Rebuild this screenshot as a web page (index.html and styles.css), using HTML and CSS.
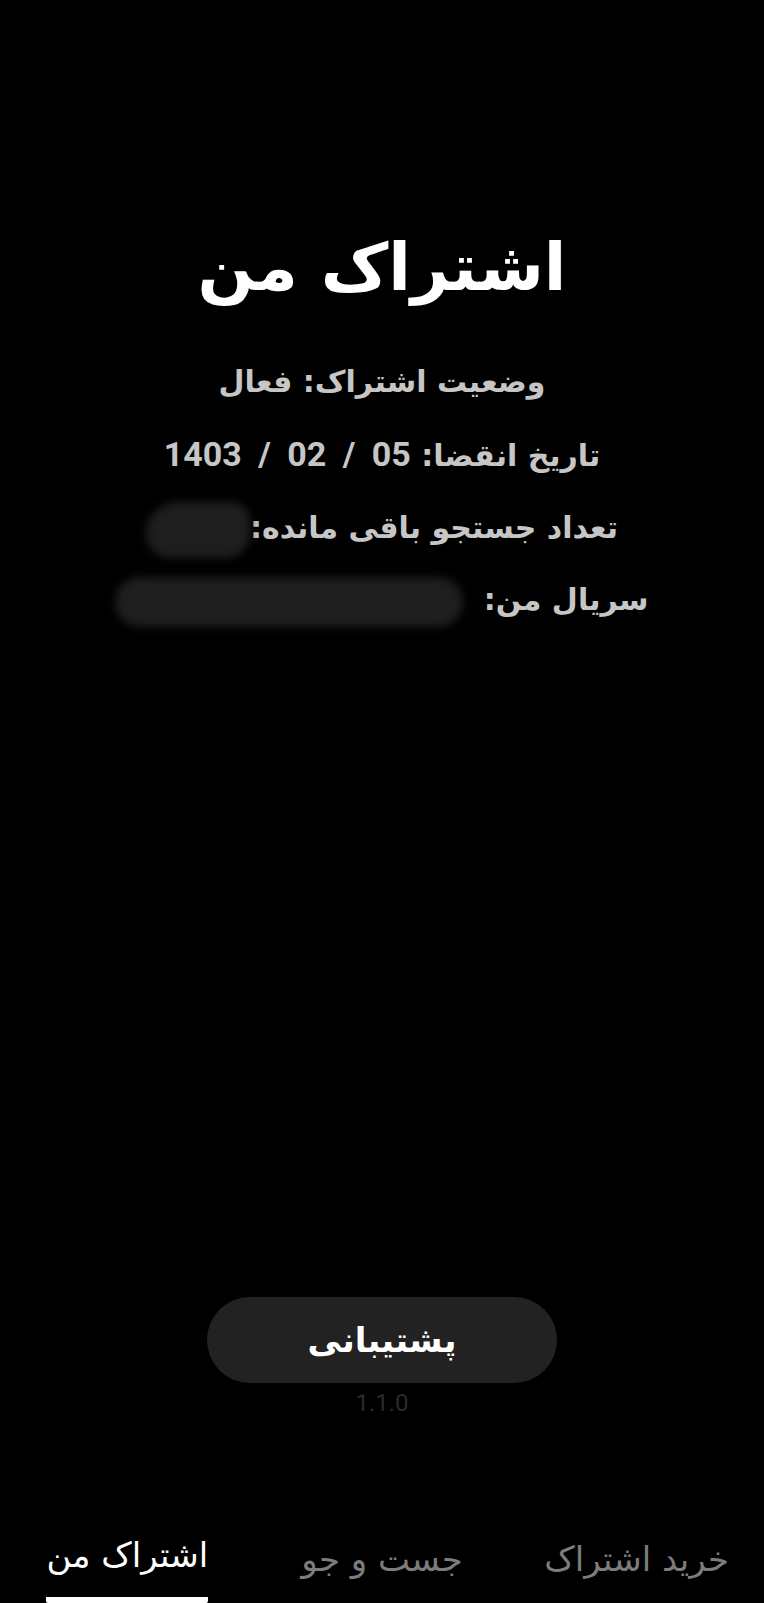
FILE: index.html
```html
<!DOCTYPE html>
<html lang="fa" dir="rtl">
<head>
<meta charset="utf-8">
<link rel="stylesheet" href="styles.css">
<title>اشتراک من</title>
</head>
<body>
<div class="screen">
  <main class="content">
    <h1 class="title">اشتراک من</h1>
    <div class="info">
      <p class="line">وضعیت اشتراک: فعال</p>
      <p class="line">تاریخ انقضا: <span class="num">05 / 02 / 1403</span></p>
      <p class="line">تعداد جستجو باقی مانده:<span class="blur blur-short"></span></p>
      <p class="line">سریال من: <span class="blur blur-long"></span></p>
    </div>
  </main>
  <div class="bottom">
    <button class="support">پشتیبانی</button>
    <div class="version">1.1.0</div>
  </div>
  <nav class="tabs" dir="ltr">
    <div class="tab active"><span class="tab-label">اشتراک من</span></div>
    <div class="tab"><span class="tab-label">جست و جو</span></div>
    <div class="tab"><span class="tab-label">خرید اشتراک</span></div>
  </nav>
</div>
</body>
</html>
```

FILE: styles.css
```css
html, body {
  margin: 0;
  padding: 0;
  background: #000;
}
body {
  font-family: "DejaVu Sans", "Noto Sans", sans-serif;
  color: #fff;
}
.screen {
  height: 1603px;
  display: flex;
  flex-direction: column;
  overflow: hidden;
}
.content {
  flex: 1;
  display: flex;
  flex-direction: column;
  align-items: center;
  padding-top: 216px;
}
.title {
  margin: 0;
  font-size: 66px;
  font-weight: 700;
  line-height: 104px;
  color: #fff;
}
.info {
  margin-top: 42px;
  display: flex;
  flex-direction: column;
  align-items: center;
  gap: 30px;
}
.line {
  margin: 0;
  font-size: 30px;
  font-weight: 700;
  line-height: 40px;
  color: #c6c6c6;
  text-align: center;
  white-space: nowrap;
}
.line + .line {
  margin-top: 2px;
}
.num {
  font-family: Roboto, "Liberation Sans", sans-serif;
  font-weight: 700;
  font-size: 34px;
  word-spacing: 8px;
}
.blur {
  display: inline-block;
  vertical-align: middle;
  background: #1e1e1e;
  filter: blur(4px);
  border-radius: 30px;
  margin-top: -12px;
  margin-bottom: -12px;
}
.blur-short {
  width: 104px;
  height: 56px;
  margin-right: 0;
  border-radius: 40px 24px 30px 30px;
}
.blur-long {
  width: 348px;
  height: 50px;
  margin-right: 10px;
}
.bottom {
  display: flex;
  flex-direction: column;
  align-items: center;
  padding-bottom: 106px;
}
.support {
  width: 350px;
  height: 86px;
  border: none;
  border-radius: 43px;
  background: #222222;
  color: #fff;
  font-family: "DejaVu Sans", sans-serif;
  font-size: 34px;
  font-weight: 700;
}
.version {
  margin-top: 6px;
  font-family: Roboto, sans-serif;
  font-size: 24px;
  line-height: 28px;
  color: #2a2a2a;
}
.tabs {
  display: flex;
  height: 80px;
}
.tab {
  flex: 1;
  display: flex;
  justify-content: center;
}
.tab-label {
  font-size: 34px;
  line-height: 40px;
  color: #7c7c7c;
  padding: 16px 0 0;
  height: 62px;
  box-sizing: border-box;
  direction: rtl;
}
.tab.active .tab-label {
  color: #fff;
  border-bottom: 6px solid #fff;
  border-radius: 0 0 2px 2px;
  height: 68px;
  padding-top: 0;
  margin-top: 12px;
}
```
